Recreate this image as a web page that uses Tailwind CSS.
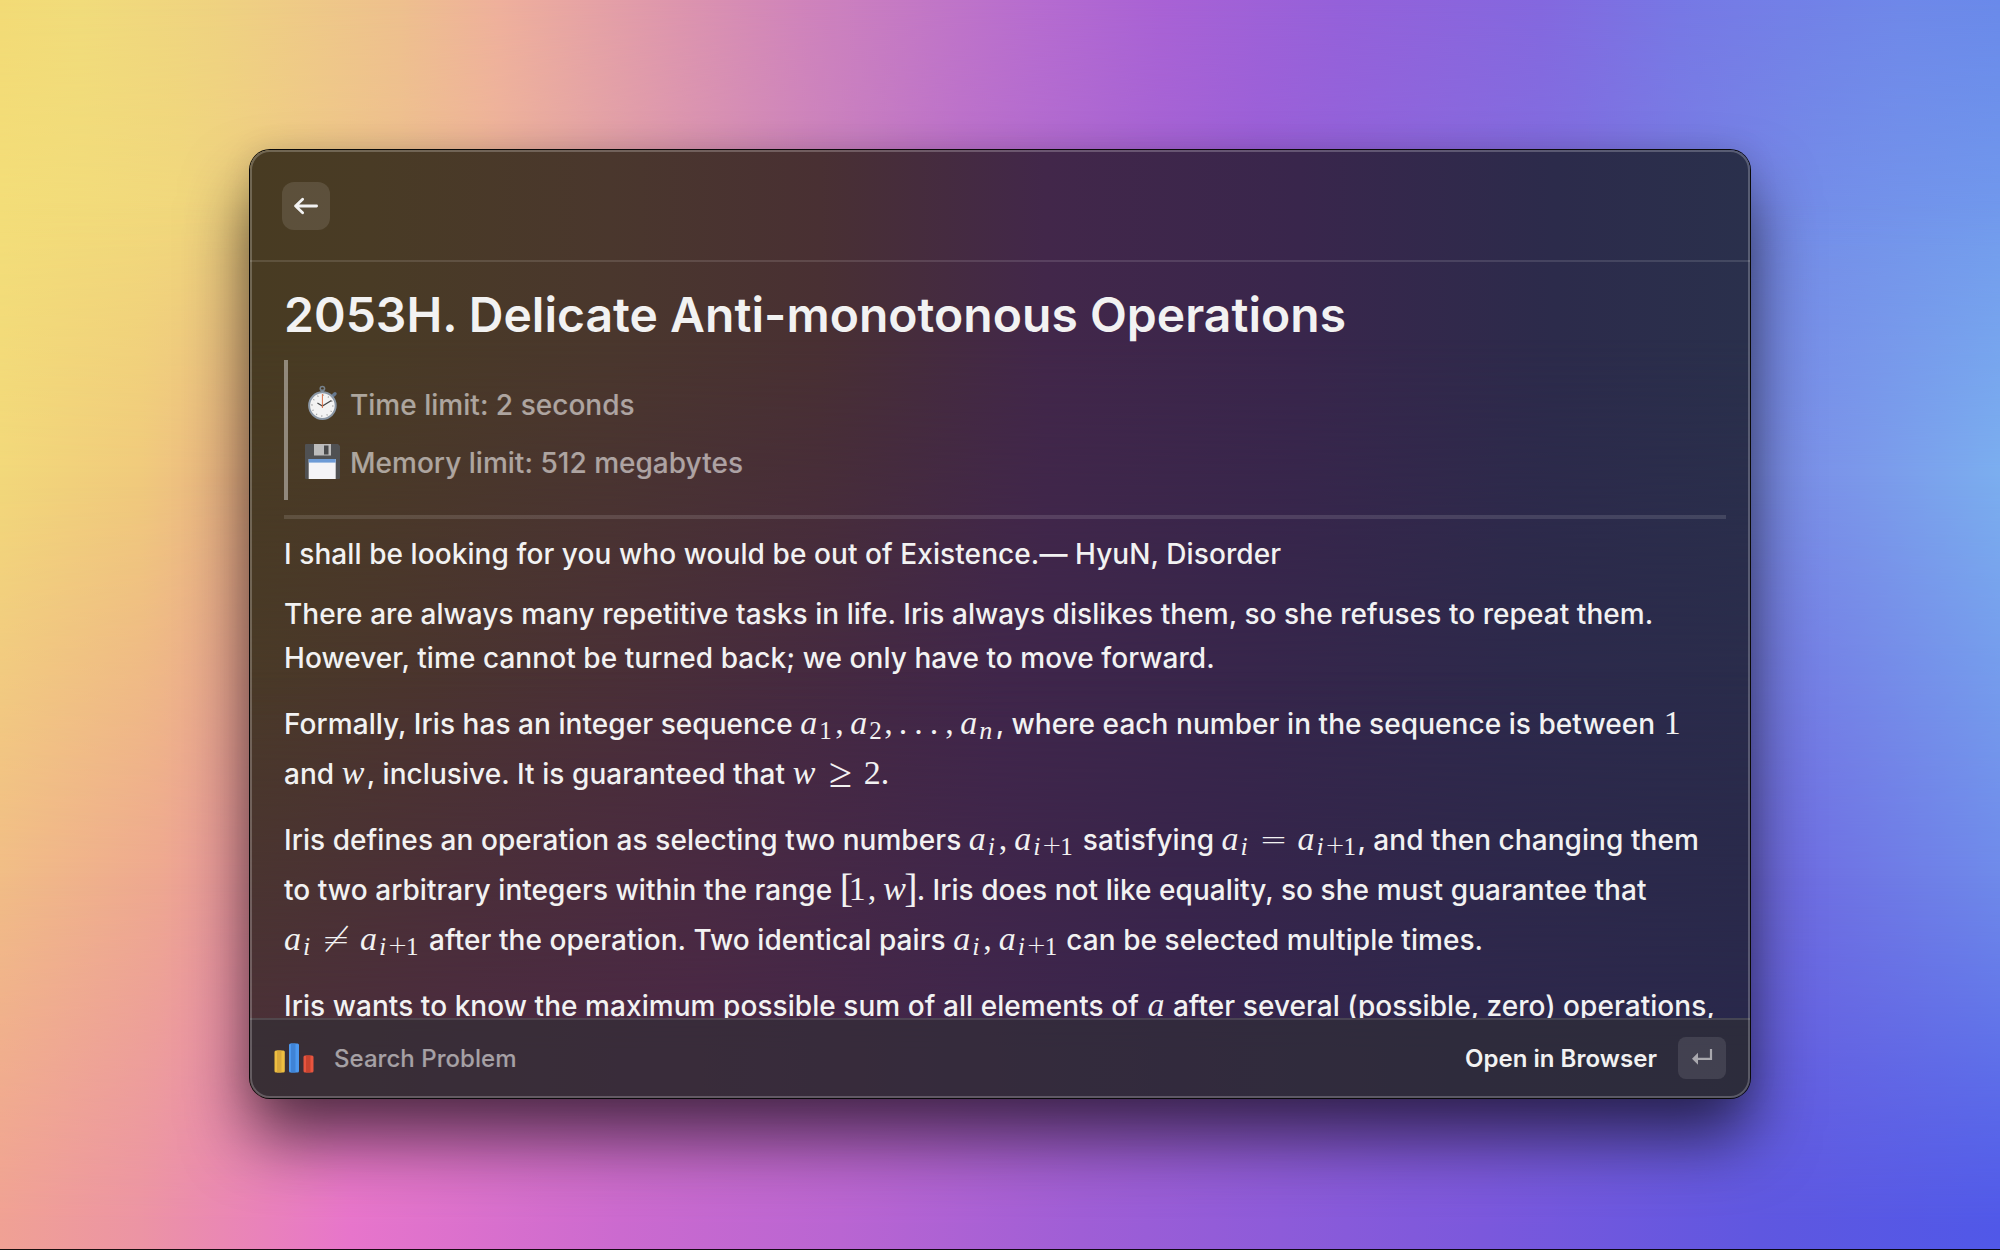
<!DOCTYPE html>
<html lang="en">
<head>
<meta charset="utf-8">
<title>2053H. Delicate Anti-monotonous Operations</title>
<script src="https://cdn.jsdelivr.net/npm/@tailwindcss/browser@4"></script>
</head>
<body class="relative flex h-[1250px] w-[2000px] justify-center overflow-hidden bg-[#d08abb] pt-[150px] font-[Inter,sans-serif] text-[#f2f2f2]">
<!-- wallpaper: horizontal colour bands faded into each other from top to bottom -->
<div class="absolute inset-0 bg-[linear-gradient(90deg,#f3db76_0%,#f1dc7b_4%,#efd281_11%,#eec08e_20%,#efb09c_25%,#dd95ae_34%,#d084bb_40%,#b66cd0_52%,#a962d5_58%,#9561da_67%,#8468df_77%,#7778e5_84%,#6f88e9_95%,#6a8aea_100%)]"></div>
<div class="absolute inset-0 bg-[linear-gradient(90deg,#f3de79_0%,#f1d87c_9%,#efb898_24%,#dc98b0_34%,#bb70cc_48%,#9a5fd9_63%,#7f72e1_79%,#7490e9_91%,#729bed_100%)] [mask-image:linear-gradient(transparent_0%,black_20%)]"></div>
<div class="absolute inset-0 bg-[linear-gradient(90deg,#f2d87a_0%,#f0ca7c_7%,#e8a58c_15%,#c878c0_46%,#9a5fd9_60%,#7a86e5_86%,#7b98ea_93%,#7baeef_100%)] [mask-image:linear-gradient(transparent_16%,black_38%)]"></div>
<div class="absolute inset-0 bg-[linear-gradient(90deg,#f1bd86_0%,#eea890_8%,#e888b0_16%,#c870c8_46%,#8a5fd9_70%,#6f6ee2_90%,#6f8aea_100%)] [mask-image:linear-gradient(transparent_38%,black_70%)]"></div>
<div class="absolute inset-0 bg-[linear-gradient(90deg,#f0a194_0%,#ec94a4_7%,#e775cb_17.5%,#cb6acf_31%,#b965d2_42%,#9f5ed6_54%,#7b58dc_74%,#5f57e0_88%,#5058e8_100%)] [mask-image:linear-gradient(transparent_70%,black_98%)]"></div>
<div class="absolute inset-x-0 bottom-0 h-px bg-black/90"></div>

<main class="relative flex h-[948px] w-[1500px] flex-col overflow-hidden rounded-[20px] shadow-[0_0_0_1px_#0a0a0a,0_40px_66px_0_rgba(0,0,0,0.62),0_0_30px_rgba(0,0,0,0.1)]">
  <!-- tint of the translucent window -->
  <div class="absolute inset-0 bg-[linear-gradient(90deg,#483b22_0%,#493b25_8%,#4a372d_24%,#493033_38%,#42274a_53%,#39264c_70%,#2c2b4b_87%,#2a304c_100%)]"></div>
  <div class="absolute inset-0 bg-[linear-gradient(90deg,#4a3a28_0%,#4b352e_10%,#4a2f38_24%,#462a41_36%,#40264b_50%,#36264b_68%,#2d294b_84%,#2a2c4b_100%)] [mask-image:linear-gradient(transparent_20%,black_60%)]"></div>
  <div class="absolute inset-0 bg-[linear-gradient(90deg,#4b3038_0%,#4b2b40_14%,#4a2846_30%,#40264b_48%,#38244c_62%,#2f274b_80%,#29284b_100%)] [mask-image:linear-gradient(transparent_55%,black_95%)]"></div>

  <header class="relative flex h-[112px] shrink-0 items-center border-b-2 border-white/12 pl-8 pt-0.5">
    <button class="flex size-12 items-center justify-center rounded-xl bg-white/11">
      <svg class="size-6" viewBox="0 0 24 24" fill="none" stroke="#f2f2f2" stroke-width="2.8" stroke-linecap="round" stroke-linejoin="round"><path d="M22.6 12H1.6M8.6 5.300 1.6 12l7 6.700"/></svg>
    </button>
  </header>

  <article class="relative h-[756px] shrink-0 overflow-hidden whitespace-nowrap pl-[34px] pr-6 text-[28px] font-medium leading-[44px]">
    <h1 class="mt-[23px] h-[60px] text-[48px] font-semibold leading-[60px] tracking-[0.03px]">2053H. Delicate Anti-monotonous Operations</h1>
    <blockquote class="mt-[15px] flex h-[140px] flex-col gap-[14px] border-l-4 border-white/40 pl-4 pt-[23px] tracking-[0.02px] text-white/55">
      <p class="flex h-11 items-center gap-[10px]">
        <svg class="-mt-1 size-9" viewBox="0 0 36 36"><circle cx="18.400" cy="3.600" r="2.200" fill="none" stroke="#77828c" stroke-width="1.500"/><path d="M18.400 4.500v3.500" stroke="#77828c" stroke-width="3"/><path d="m28.500 11 2.500-2.300" stroke="#66788f" stroke-width="3.400" stroke-linecap="round"/><circle cx="18.400" cy="20.600" r="13.300" fill="#f3f3f3" stroke="#8b97a5" stroke-width="2"/><circle cx="18.400" cy="20.600" r="10.400" fill="none" stroke="#999" stroke-width="1.400" stroke-dasharray="1 4.446"/><path d="m13.400 18 5 3 9-5.500" fill="none" stroke="#444" stroke-width="1.200"/><path d="M18.400 9v14" stroke="#dc7148" stroke-width="1"/></svg>
        <span>Time limit: 2 seconds</span>
      </p>
      <p class="flex h-11 items-center gap-[10px]">
        <svg class="-mt-1 size-9" viewBox="0 0 36 36"><path d="M1 2q0-1 1-1h32l2 2v32q0 1-1 1H2q-1 0-1-1z" fill="#505153"/><path d="M10 1h17v11.500H10z" fill="#bcbcbc"/><path d="M20 2.500h4.500v9H20z" fill="#48494b"/><path d="M4.700 16h27v20h-27z" fill="#f4f4f7"/><path d="M4.700 16h27v3.600h-27z" fill="#6d9bd6"/></svg>
        <span>Memory limit: 512 megabytes</span>
      </p>
    </blockquote>
    <hr class="mt-[15px] h-1 border-0 bg-white/12">

    <div class="tracking-[0.06px]">
    <p class="mt-[13px] tracking-[0.08px]">I shall be looking for you who would be out of Existence.— HyuN, Disorder</p>
    <p class="mt-4">There are always many repetitive tasks in life. Iris always dislikes them, so she refuses to repeat them.<br>However, time cannot be turned back; we only have to move forward.</p>

    <div class="mt-[19px] flex flex-col gap-4 leading-[50px]">
      <p>
        <span class="flex h-[50px] whitespace-pre"><span>Formally, Iris has an integer sequence </span><span class="flex -translate-y-px font-['Liberation_Serif',serif] text-[34px] font-normal"><i class="w-[19px]">a</i><span class="w-[16px] translate-y-[8px] text-[25px]">1</span><span class="w-[15px]">,</span><i class="w-[19px]">a</i><span class="w-[15px] translate-y-[8px] text-[25px]">2</span><span class="w-[14.500px]">,</span><span class="w-[15.500px]">.</span><span class="w-[15.500px]">.</span><span class="w-[15.500px]">.</span><span class="w-[15px]">,</span><i class="w-[19px]">a</i><i class="w-[16.500px] translate-y-[8px] text-[26px]">n</i></span><span>, where each number in the sequence is between </span><span class="ml-px -translate-y-px font-['Liberation_Serif',serif] text-[34px] font-normal">1</span></span>
        <span class="flex h-[50px] whitespace-pre"><span>and </span><i class="w-[25px] -translate-y-px font-['Liberation_Serif',serif] text-[34px] font-normal">w</i><span>, inclusive. It is guaranteed that </span><span class="flex -translate-y-px font-['Liberation_Serif',serif] text-[34px] font-normal"><i class="w-[24px]">w</i><span class="w-[47px] text-center text-[42px]">≥</span><span class="w-[17px]">2</span></span><span>.</span></span>
      </p>
      <p>
        <span class="flex h-[50px] whitespace-pre"><span>Iris defines an operation as selecting two numbers </span><span class="flex -translate-y-px font-['Liberation_Serif',serif] text-[34px] font-normal"><i class="w-[19px]">a</i><i class="w-[11px] translate-y-[8px] text-[26px]">i</i><span class="w-[15.500px]">,</span><i class="w-[19px]">a</i><i class="w-[8.500px] translate-y-[8px] text-[26px]">i</i><span class="w-[18.500px] translate-y-[6px] text-center font-['DejaVu_Sans',sans-serif] text-[24px] font-extralight">+</span><span class="w-[15px] translate-y-[8px] text-[25px]">1</span></span><span> satisfying </span><span class="flex -translate-y-px font-['Liberation_Serif',serif] text-[34px] font-normal"><i class="w-[19px]">a</i><i class="w-[9px] translate-y-[8px] text-[26px]">i</i><span class="w-[48px] text-center font-['DejaVu_Sans',sans-serif] text-[34px] font-extralight">=</span><i class="w-[19px]">a</i><i class="w-[8.500px] translate-y-[8px] text-[26px]">i</i><span class="w-[18.500px] translate-y-[6px] text-center font-['DejaVu_Sans',sans-serif] text-[24px] font-extralight">+</span><span class="w-[14px] translate-y-[8px] text-[25px]">1</span></span><span>, and then changing them</span></span>
        <span class="flex h-[50px] whitespace-pre"><span>to two arbitrary integers within the range </span><span class="flex -translate-y-px font-['Liberation_Serif',serif] text-[34px] font-normal"><span class="w-[9px] text-[40px]">[</span><span class="w-[19px]">1</span><span class="w-[15.500px]">,</span><i class="w-[21px]">w</i><span class="w-[12.500px] text-[40px]">]</span></span><span>. Iris does not like equality, so she must guarantee that</span></span>
        <span class="flex h-[50px] whitespace-pre"><span class="flex -translate-y-px font-['Liberation_Serif',serif] text-[34px] font-normal"><i class="w-[19px]">a</i><i class="w-[9px] translate-y-[8px] text-[26px]">i</i><span class="w-[48px] text-center font-['DejaVu_Sans',sans-serif] text-[34px] font-extralight">≠</span><i class="w-[19px]">a</i><i class="w-[8.500px] translate-y-[8px] text-[26px]">i</i><span class="w-[18.500px] translate-y-[6px] text-center font-['DejaVu_Sans',sans-serif] text-[24px] font-extralight">+</span><span class="w-[15.500px] translate-y-[8px] text-[25px]">1</span></span><span> after the operation. Two identical pairs </span><span class="flex -translate-y-px font-['Liberation_Serif',serif] text-[34px] font-normal"><i class="w-[19px]">a</i><i class="w-[11px] translate-y-[8px] text-[26px]">i</i><span class="w-[15.500px]">,</span><i class="w-[19px]">a</i><i class="w-[8.500px] translate-y-[8px] text-[26px]">i</i><span class="w-[18.500px] translate-y-[6px] text-center font-['DejaVu_Sans',sans-serif] text-[24px] font-extralight">+</span><span class="w-[14px] translate-y-[8px] text-[25px]">1</span></span><span> can be selected multiple times.</span></span>
      </p>
      <p>
        <span class="flex h-[50px] whitespace-pre"><span>Iris wants to know the maximum possible sum of all elements of </span><i class="ml-px w-[18px] -translate-y-px font-['Liberation_Serif',serif] text-[34px] font-normal">a</i><span> after several (possible, zero) operations,</span></span>
      </p>
    </div>
    </div>
  </article>

  <footer class="relative flex grow items-center border-t-2 border-white/12 bg-[#2f2f34]/62 pb-0.5 pl-6 pr-6 text-2xl font-medium">
    <svg class="h-[30px] w-[40px]" viewBox="0 0 40 30"><rect x=".5" y="7.500" width="10.300" height="22" rx="1.500" fill="#eebe41"/><path d="M3 7.500h4.500v22H3z" fill="#d9a93b"/><rect x="15" y=".5" width="10" height="29" rx="1.500" fill="#4d98ee"/><path d="M17 .5h4.500v29H17z" fill="#3f83d6"/><rect x="29.500" y="12.500" width="10" height="17" rx="1.500" fill="#e8553f"/><path d="M32 12.500h4.500v17H32z" fill="#c9432f"/></svg>
    <span class="ml-5 mt-0.5 tracking-[0.04px] text-white/55">Search Problem</span>
    <span class="ml-auto mt-0.5 font-semibold tracking-[0.04px]">Open in Browser</span>
    <kbd class="ml-[21px] flex h-[42px] w-12 items-center justify-center rounded-lg bg-white/10">
      <svg class="h-[18px] w-[22px]" viewBox="0 0 22 18"><path d="M20 0v9.800H6" fill="none" stroke="#a9a8ae" stroke-width="2.200"/><path d="M1 9.800 7 3.800v12z" fill="#a9a8ae"/></svg>
    </kbd>
  </footer>
  <div class="pointer-events-none absolute inset-0 rounded-[20px] border-2 border-white/22"></div>
</main>
</body>
</html>
